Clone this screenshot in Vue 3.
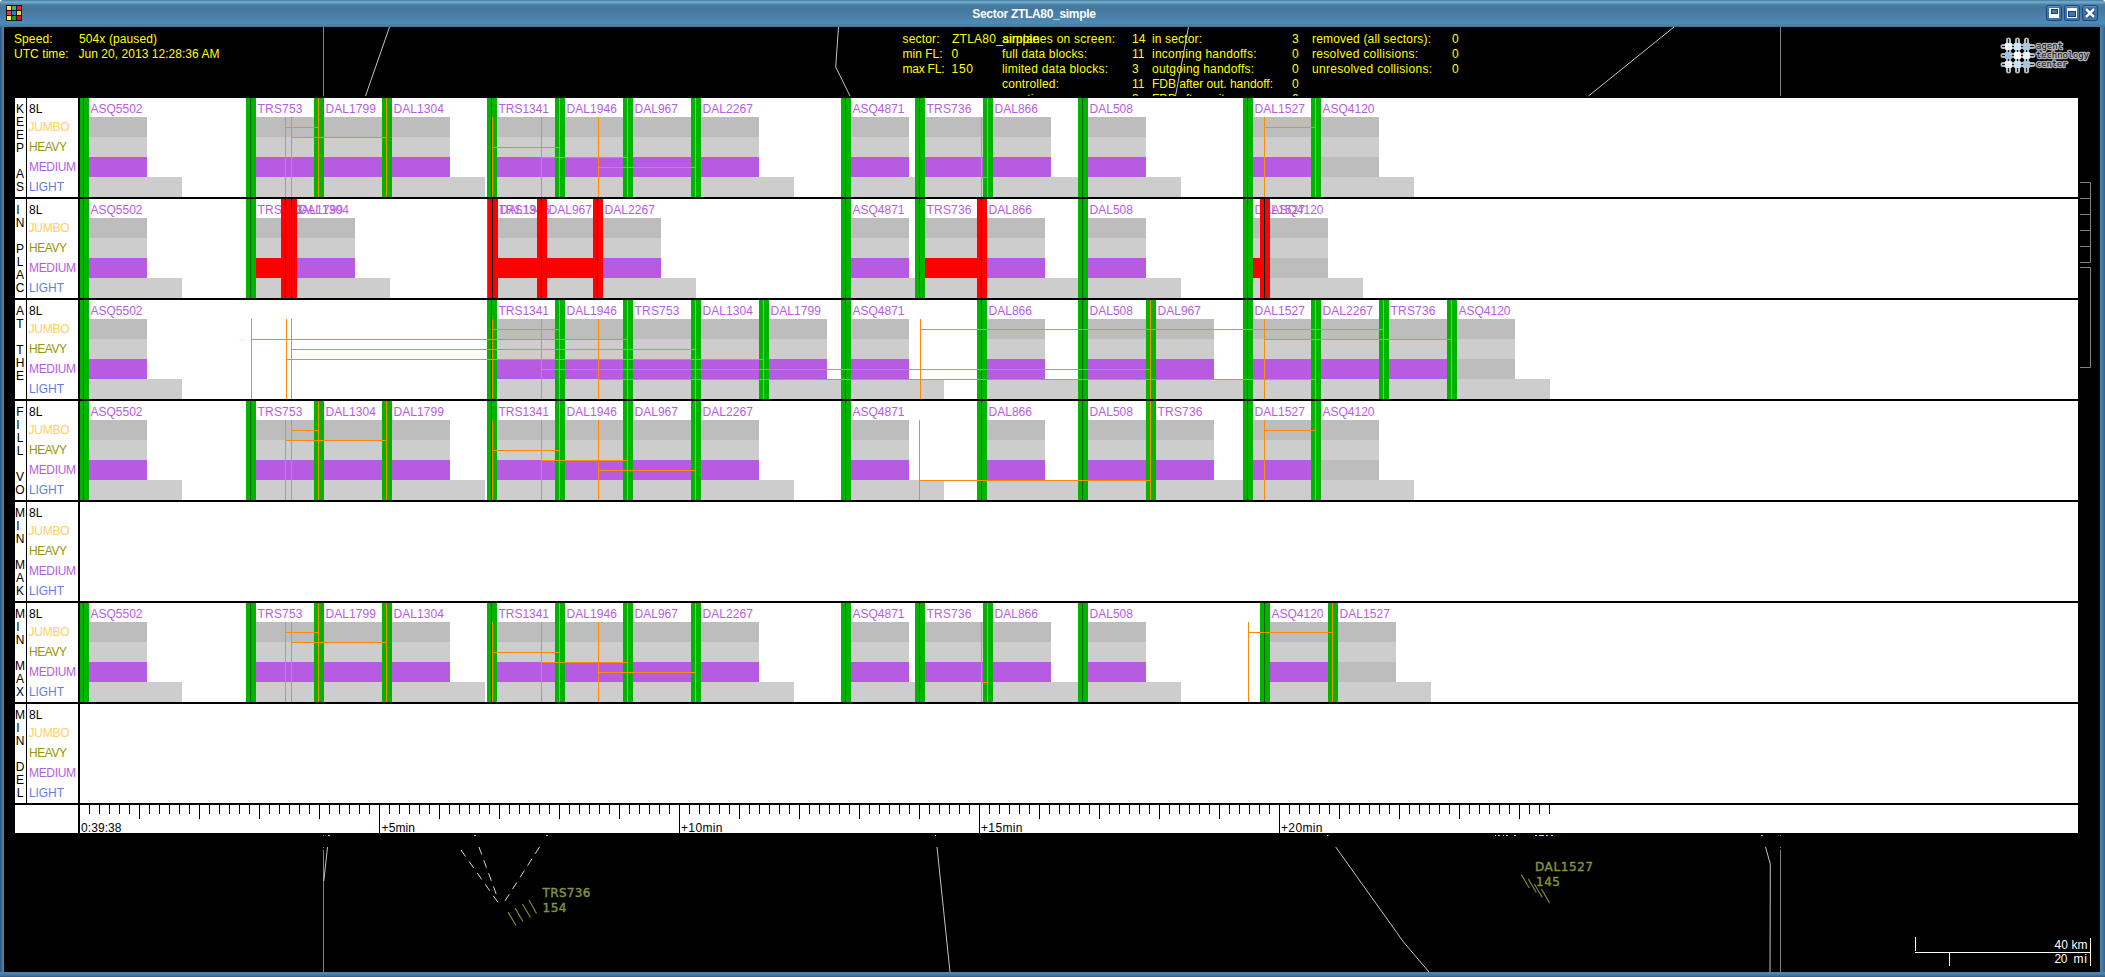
<script setup>
const WAKE = 58
const WAKE_LIGHT = 93
const SLOT = 10

// [callsign, slot start, requested time (if shifted)]
const strategies = [
  {
    title: 'KEEP AS',
    flights: [
      ['ASQ5502', 79], ['TRS753', 246], ['DAL1799', 314, 285], ['DAL1304', 382, 291],
      ['TRS1341', 487], ['DAL1946', 555, 492], ['DAL967', 623, 541], ['DAL2267', 691, 598],
      ['ASQ4871', 841], ['TRS736', 915], ['DAL866', 983, 981], ['DAL508', 1078],
      ['DAL1527', 1243], ['ASQ4120', 1311, 1264],
    ],
  },
  {
    title: 'IN PLAC',
    flights: [
      ['ASQ5502', 79], ['TRS753', 246], ['DAL1799', 281, null, true], ['DAL1304', 287, null, true],
      ['TRS1341', 487], ['DAL1946', 488, null, true], ['DAL967', 537, null, true],
      ['DAL2267', 593, null, true], ['ASQ4871', 841], ['TRS736', 915],
      ['DAL866', 977, null, true], ['DAL508', 1078], ['DAL1527', 1243], ['ASQ4120', 1260, null, true],
    ],
  },
  {
    title: 'AT THE',
    flights: [
      ['ASQ5502', 79], ['TRS1341', 487], ['DAL1946', 555, 492], ['TRS753', 623, 251],
      ['DAL1304', 691, 291], ['DAL1799', 759, 286], ['ASQ4871', 841], ['DAL866', 977],
      ['DAL508', 1078], ['DAL967', 1146, 541], ['DAL1527', 1243], ['DAL2267', 1311, 598],
      ['TRS736', 1379, 920], ['ASQ4120', 1447, 1264],
    ],
  },
  {
    title: 'FILL VO',
    flights: [
      ['ASQ5502', 79], ['TRS753', 246], ['DAL1304', 314, 291], ['DAL1799', 382, 285],
      ['TRS1341', 487], ['DAL1946', 555, 492], ['DAL967', 623, 541], ['DAL2267', 691, 598],
      ['ASQ4871', 841], ['DAL866', 977], ['DAL508', 1078], ['TRS736', 1146, 919],
      ['DAL1527', 1243], ['ASQ4120', 1311, 1264],
    ],
  },
  { title: 'MIN MAK', flights: [] },
  {
    title: 'MIN MAX',
    flights: [
      ['ASQ5502', 79], ['TRS753', 246], ['DAL1799', 314, 285], ['DAL1304', 382, 291],
      ['TRS1341', 487], ['DAL1946', 555, 492], ['DAL967', 623, 541], ['DAL2267', 691, 598],
      ['ASQ4871', 841], ['TRS736', 915], ['DAL866', 983, 981], ['DAL508', 1078],
      ['ASQ4120', 1260], ['DAL1527', 1328, 1248],
    ],
  },
  { title: 'MIN DEL', flights: [] },
]

const rows = strategies.map(({ title, flights }) => {
  const items = flights.map(([name, x, wanted, clash], i) => {
    const next = flights[i + 1]
    const last = i === flights.length - 1
    return {
      name, x, wanted, clash,
      medium: next && next[3] ? 'hit' : last ? 'dark' : 'mid',
      mediumWidth: next ? Math.min(WAKE, next[1] - x - SLOT) : WAKE,
      labelWidth: name.length === 7 ? (name.startsWith('ASQ') ? 52 : 50.5) : name.startsWith('TRS') ? 45 : 43.5,
    }
  })
  let n = 0
  const links = items
    .filter((f) => f.wanted)
    .map((f) => ({ from: f.wanted, to: f.x + 4, y: 29 + 10 * (n++ % 6) }))
  return { title, items, links }
})

const classes = [
  ['8L', 'rwy', 29, 15, 13.5],
  ['JUMBO', 'jumbo', 28.5, 33, 41],
  ['HEAVY', 'heavy', 29, 53, 38],
  ['MEDIUM', 'medium', 29, 73, 47],
  ['LIGHT', 'light', 29, 93, 35],
]

const ticks = Array.from({ length: 147 }, (_, i) => i + 1).map((k) => ({
  x: 79 + 10 * k,
  h: k % 30 === 0 ? 28 : k % 6 === 0 ? 14 : 9,
}))
const timeLabels = [
  ['0:39:38', 81, 40.5], ['+5min', 381.5, 33.5], ['+10min', 681, 41.5],
  ['+15min', 981, 41.5], ['+20min', 1281, 41.5],
]

// [text, x, baseline, width]
const status = [
  ['Speed:', 14, 43, 38.5], ['504x (paused)', 79, 43, 78],
  ['UTC time:', 14, 58, 54.5], ['Jun 20, 2013 12:28:36 AM', 78.5, 58, 141],
  ['sector:', 902.5, 43, 37], ['ZTLA80_simple', 952, 43, 87],
  ['min FL:', 902.5, 58, 40], ['0', 951.5, 58, 6.7],
  ['max FL:', 902.5, 73, 42], ['150', 951.5, 73, 21.5],
  ['airplanes on screen:', 1002, 43, 113], ['14', 1132, 43, 13.5],
  ['full data blocks:', 1002, 58, 85], ['11', 1132, 58, 12.5],
  ['limited data blocks:', 1002, 73, 106], ['3', 1132, 73, 6.7],
  ['controlled:', 1002, 88, 57], ['11', 1132, 88, 12.5],
  ['coasting:', 1002, 103, 48], ['3', 1132, 103, 6.7],
  ['in sector:', 1152, 43, 50], ['3', 1292, 43, 6.7],
  ['incoming handoffs:', 1152, 58, 104.5], ['0', 1292, 58, 6.7],
  ['outgoing handoffs:', 1152, 73, 102], ['0', 1292, 73, 6.7],
  ['FDB after out. handoff:', 1152, 88, 121], ['0', 1292, 88, 6.7],
  ['FDB after exit:', 1152, 103, 76], ['0', 1292, 103, 6.7],
  ['removed (all sectors):', 1312, 43, 119], ['0', 1452, 43, 6.7],
  ['resolved collisions:', 1312, 58, 106], ['0', 1452, 58, 6.7],
  ['unresolved collisions:', 1312, 73, 120], ['0', 1452, 73, 6.7],
]

const logoTiles = ['#e9f4fb', '#cfe6f4', '#a3c9ec', '#a3c3e8', '#ffffff', '#eaf5fb', '#e4f1fa', '#c6e1f4', '#9fc8e4']
const iconTiles = ['#f7e37a', '#4fae5c', '#e0202c', '#f03a3a', '#1787d6', '#e8d23c', '#fdf04a', '#149a3c', '#c8161c']
</script>

<template>
  <div class="window">
    <header class="titlebar">
      <svg class="app-icon" width="16" height="16">
        <rect width="16" height="16" fill="#111" />
        <rect v-for="(c, i) in iconTiles" :key="i" :x="1 + (i % 3) * 5" :y="1 + Math.floor(i / 3) * 5" width="4" height="4" :fill="c" />
      </svg>
      <h1 class="title">Sector ZTLA80_simple</h1>
      <div class="buttons">
        <button class="btn" aria-label="Minimize">
          <svg width="16" height="16"><rect x="3" y="3" width="10" height="10" fill="#fff" /><rect x="5.500" y="4.500" width="6" height="4" fill="#3f78ac" stroke="#1c3c7c" /></svg>
        </button>
        <button class="btn" aria-label="Maximize">
          <svg width="16" height="16"><rect x="3" y="3" width="10" height="10" fill="#fff" /><rect x="4.500" y="6.500" width="7" height="5" fill="#3f78ac" stroke="#1c3c7c" /></svg>
        </button>
        <button class="btn" aria-label="Close">
          <svg width="16" height="16"><path d="M4 4l8 8M12 4l-8 8" stroke="#1c3c7c" stroke-width="4.500" /><path d="M4 4l8 8M12 4l-8 8" stroke="#fff" stroke-width="2.600" /></svg>
        </button>
      </div>
    </header>

    <main class="radar">
      <svg class="map" width="2096" height="945" viewBox="4 27 2096 945">
        <defs>
          <clipPath id="top"><rect x="4" y="27" width="2096" height="69" /></clipPath>
        </defs>
        <g clip-path="url(#top)">
          <text v-for="([t, x, y, w], i) in status" :key="i" class="status" :x="x" :y="y" :textLength="w">{{ t }}</text>
        </g>
        <g class="edge">
          <path d="M323.500 27V96M1780.500 27V96M323.500 850V972M1780.500 850V972M323.500 847v1M1780.500 847v1M323 835.500h1M1780 835.500h1" />
          <path d="M2080 182.500h10.500v80H2080M2080 198.500h10M2080 214.500h10M2080 230.500h10M2080 246.500h10M2080 267.500h10.500v100H2080" />
        </g>
        <g class="border">
          <path d="M389.500 27L365.500 96M838.500 27L835.700 67L850 96M1188.500 27L1175.500 96M1674 27L1588.500 96" />
          <path d="M327.500 847L323.800 881M937 847L950 972M1335.700 847L1403.500 942L1429 972M1765.500 847L1770.300 864L1770 972" />
          <path d="M328 835.500h2M474 835.500h2M546 835.500h2M935 835.500h1M1327 835.500h1.500M1761 835.500h2" />
        </g>
        <g class="vector">
          <path d="M461 850L500.500 906" />
          <path d="M479 847L498 899" />
          <path d="M539.500 847L503 904" />
        </g>
        <path class="glimpse" d="M1495 835.500h1M1498 835.500h2M1503 835.500h1M1506 835.500h2M1514 835.500h2M1535 835.500h2M1539 835.500h5M1546 835.500h2M1551 835.500h2" />
        <g class="trail">
          <path d="M508 912L516 925.500M515 908L523 921.500M522.500 904L530.500 917.500M529 900L536.500 913.500" />
          <path d="M1521.300 874.500L1529.300 888M1528.300 879L1536.300 892.500M1534.300 884L1542.300 897.500M1541.500 889L1549.500 903" />
        </g>
        <g class="track">
          <text x="542.500" y="897" textLength="48">TRS736</text>
          <text x="542.500" y="912" textLength="24">154</text>
          <text x="1535" y="871" textLength="58">DAL1527</text>
          <text x="1536" y="886" textLength="24">145</text>
        </g>
        <g class="scale">
          <path d="M1915.500 937V951M1915 952.500H2091M1949.500 953V966M2090.500 938V966" />
          <text x="2054.500" y="949" textLength="33">40 km</text>
          <text x="2054.500" y="963" textLength="13">20</text>
          <text x="2073.500" y="963" textLength="13.500">mi</text>
        </g>
        <g class="logo">
          <path class="halo" d="M2008.500 40V71M2017.500 40V71M2026.500 40V71M2003 46.500H2033M2003 55.500H2033M2003 64.500H2033" />
          <path class="grid" d="M2008.500 39V72M2017.500 39V72M2026.500 39V72M2002 46.500H2034M2002 55.500H2034M2002 64.500H2034" />
          <rect v-for="(c, i) in logoTiles" :key="i" :x="2005 + (i % 3) * 9" :y="43 + Math.floor(i / 3) * 9" width="7" height="7" rx="1" :fill="c" />
          <text x="2036" y="49" textLength="27">agent</text>
          <text x="2036" y="58" textLength="53">technology</text>
          <text x="2036" y="67" textLength="31.500">center</text>
        </g>
      </svg>

      <section class="chart">
        <svg v-for="row in rows" :key="row.title" class="row" width="2063" height="99" viewBox="15 0 2063 99">
          <template v-for="(ch, i) in row.title" :key="i">
            <text v-if="ch !== ' '" class="letter" :x="ch === 'I' ? 18 : 20" :y="15 + i * 13">{{ ch }}</text>
          </template>
          <rect x="26" y="0" width="1" height="99" />
          <text v-for="[t, c, x, y, w] in classes" :key="t" :class="c" :x="x" :y="y" :textLength="w">{{ t }}</text>
          <g v-for="f in row.items" :key="f.name">
            <rect class="gray-dark" :x="f.x + 10" y="19" width="58" height="20" />
            <rect class="gray" :x="f.x + 10" y="39" width="58" height="20" />
            <rect :class="f.medium" :x="f.x + 10" y="59" :width="Math.max(f.mediumWidth, 0)" height="20" />
            <rect class="gray" :x="f.x + 10" y="79" :width="WAKE_LIGHT" height="20" />
            <rect :class="f.clash ? 'hit' : 'slot'" :x="f.x" y="0" :width="SLOT" height="99" />
            <rect :class="f.clash ? 'clash-mark' : 'mark'" :x="f.x + 4" y="0" width="1" height="99" />
            <text class="medium" :x="f.x + 11.5" y="15" :textLength="f.labelWidth">{{ f.name }}</text>
          </g>
          <g v-for="l in row.links" :key="l.to" class="link">
            <rect :x="l.from" y="19" width="1" height="80" />
            <rect :x="l.to" y="0" width="1" height="99" />
            <rect :x="l.from" :y="l.y" :width="l.to - l.from" height="1" />
          </g>
          <rect x="78" y="0" width="2" height="99" />
        </svg>
        <svg class="axis" width="2063" height="28" viewBox="15 0 2063 28">
          <rect x="78" y="0" width="2" height="28" />
          <rect v-for="t in ticks" :key="t.x" :x="t.x" y="0" width="1" :height="t.h" />
          <text v-for="[t, x, w] in timeLabels" :key="t" :x="x" y="27" :textLength="w">{{ t }}</text>
        </svg>
      </section>
    </main>
  </div>
</template>

<style>
html,
body {
  margin: 0;
  background: #fff;
}
</style>

<style scoped>
.window {
  box-sizing: border-box;
  width: 2105px;
  height: 977px;
  display: flex;
  flex-direction: column;
  overflow: hidden;
  border-radius: 4px 4px 0 0;
  background: linear-gradient(90deg, #355a80 0, #355a80 1px, #4674a4 2px, #5088b6 4px, #4a86b0 2100px, #4577a5 2102px, #416c98 2104px, #355a80 2105px);
  font-family: "Liberation Sans", Arial, sans-serif;
}
.titlebar {
  box-sizing: border-box;
  height: 27px;
  flex: none;
  display: flex;
  align-items: flex-start;
  padding: 5px 7px 0 6px;
  background: linear-gradient(180deg, #44769c 0, #5a97ba 1px, #70abc8 2px, #69a4c3 3px, #4d84aa 4px, #45779c 7px, #477ba2 13px, #4b84ae 19px, #4d8cb5 23px, #4682a8 25px, #40779b 27px);
}
.title {
  flex: 1;
  margin: 0;
  color: #fff;
  font-size: 12px;
  line-height: 18px;
  letter-spacing: -0.3px;
  text-align: center;
}
.buttons {
  display: flex;
  gap: 2px;
}
.btn {
  width: 16px;
  height: 16px;
  padding: 0;
  border: 0;
  border-radius: 3px;
  background: #3d76ad;
  box-shadow: inset 0 0 0 1px #1f4585, inset 1px 2px 0 #5b93c4;
}
.btn svg,
.app-icon {
  display: block;
}
.radar {
  position: relative;
  flex: none;
  box-sizing: border-box;
  width: 2096px;
  height: 945px;
  margin: 0 5px 0 4px;
  padding: 71px 22px 0 11px;
  background: #000;
}
.window::after {
  content: "";
  height: 5px;
  background: linear-gradient(180deg, #4c88b2 0, #4a82ad 2px, #4474a2 3px, #34587f 5px);
}
.map {
  position: absolute;
  inset: 0;
}
.map path {
  fill: none;
}
.status {
  fill: #ff0;
  font-size: 12px;
}
.edge {
  stroke: #828282;
}
.border {
  stroke: #c4c4c4;
}
.vector {
  stroke: #d8d8d8;
  stroke-dasharray: 8 6;
}
.glimpse {
  stroke: #d6e85a;
}
.trail {
  stroke: #7e8a32;
  stroke-width: 1.2;
}
.track {
  fill: #85953c;
  stroke: #85953c;
  stroke-width: 0.4;
  font: 12px "DejaVu Sans", sans-serif;
}
.scale path {
  stroke: #fff;
}
.scale text {
  fill: #fff;
  font-size: 12px;
}
.logo .halo {
  stroke: #b8b8b8;
  stroke-width: 5;
  stroke-linecap: round;
}
.logo .grid {
  stroke: #222;
}
.logo text {
  fill: #0a0a0a;
  stroke: #b4b4b4;
  stroke-width: 2.5;
  stroke-linejoin: round;
  paint-order: stroke;
  font: 9px "DejaVu Sans Mono", monospace;
}
.chart {
  position: relative;
  display: flex;
  flex-direction: column;
  gap: 2px;
  height: 735px;
}
.row,
.axis {
  display: block;
  flex: none;
  background: #fff;
  font-size: 12px;
}
.axis {
  overflow: visible;
}
.row rect {
  shape-rendering: crispEdges;
}
.letter {
  text-anchor: middle;
}
.jumbo {
  fill: #ffcf5c;
}
.heavy {
  fill: #969600;
}
.medium,
.mid {
  fill: #b75ce2;
}
.light {
  fill: #5f7fe4;
}
.gray {
  fill: #cdcdcd;
}
.gray-dark,
.dark {
  fill: #bdbdbd;
}
.slot {
  fill: #00b400;
}
.mark {
  fill: #006400;
}
.clash-mark {
  fill: #000;
}
.hit {
  fill: #f00;
}
.link rect {
  fill: #ff8c00;
}
</style>
